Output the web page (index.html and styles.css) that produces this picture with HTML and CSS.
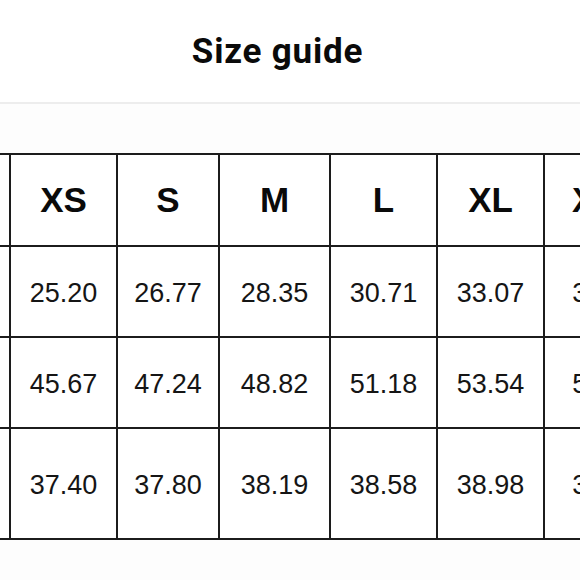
FILE: index.html
```html
<!DOCTYPE html>
<html lang="en">
<head>
<meta charset="utf-8">
<title>Size guide</title>
<link rel="stylesheet" href="styles.css">
</head>
<body>
<header class="sheet-header">
  <h1 class="sheet-title">Size guide</h1>
</header>
<section class="sheet-body">
  <div class="table-scroll">
    <div class="size-table" role="table">
      <div class="cell label" role="columnheader"></div>
      <div class="cell head" role="columnheader">XS</div>
      <div class="cell head" role="columnheader">S</div>
      <div class="cell head" role="columnheader">M</div>
      <div class="cell head" role="columnheader">L</div>
      <div class="cell head" role="columnheader">XL</div>
      <div class="cell head" role="columnheader">XXL</div>

      <div class="cell label" role="rowheader"></div>
      <div class="cell" role="cell">25.20</div>
      <div class="cell" role="cell">26.77</div>
      <div class="cell" role="cell">28.35</div>
      <div class="cell" role="cell">30.71</div>
      <div class="cell" role="cell">33.07</div>
      <div class="cell" role="cell">35.43</div>

      <div class="cell label" role="rowheader"></div>
      <div class="cell" role="cell">45.67</div>
      <div class="cell" role="cell">47.24</div>
      <div class="cell" role="cell">48.82</div>
      <div class="cell" role="cell">51.18</div>
      <div class="cell" role="cell">53.54</div>
      <div class="cell" role="cell">55.91</div>

      <div class="cell label" role="rowheader"></div>
      <div class="cell" role="cell">37.40</div>
      <div class="cell" role="cell">37.80</div>
      <div class="cell" role="cell">38.19</div>
      <div class="cell" role="cell">38.58</div>
      <div class="cell" role="cell">38.98</div>
      <div class="cell" role="cell">39.37</div>
    </div>
  </div>
</section>
</body>
</html>
```
FILE: styles.css
```css
* { box-sizing: border-box; }

html, body {
  margin: 0;
  padding: 0;
  background: #ffffff;
  color: #111111;
}

body {
  width: 580px;
  height: 580px;
  overflow: hidden;
  font-family: "Liberation Sans", Arial, sans-serif;
}

.sheet-header {
  height: 104px;
  display: flex;
  align-items: center;
  justify-content: center;
  padding-right: 25px;
  border-bottom: 2px solid #ededed;
}

.sheet-title {
  margin: 0;
  font-family: Roboto, "Liberation Sans", sans-serif;
  font-weight: 700;
  font-size: 35px;
  letter-spacing: 0.8px;
  color: #0a0a0a;
}

.sheet-body {
  background: #fdfdfd;
  padding-top: 49px;
  height: 476px;
}

.table-scroll {
  overflow: hidden;
  width: 580px;
}

.size-table {
  display: grid;
  grid-template-columns: 120px 107px 102px 111px 107px 107px 124px;
  grid-template-rows: 92px 91px 91px 111px;
  width: max-content;
  margin-left: -111px;
  border-top: 2px solid #1c1c1c;
  border-left: 2px solid #1c1c1c;
  background: #ffffff;
}

.cell {
  display: flex;
  align-items: center;
  justify-content: center;
  padding-top: 3px;
  border-right: 2px solid #1c1c1c;
  border-bottom: 2px solid #1c1c1c;
  font-size: 27px;
  color: #151515;
  white-space: nowrap;
}

.cell.head {
  padding-top: 0;
  font-weight: 700;
  font-size: 35px;
  color: #0a0a0a;
}
```
